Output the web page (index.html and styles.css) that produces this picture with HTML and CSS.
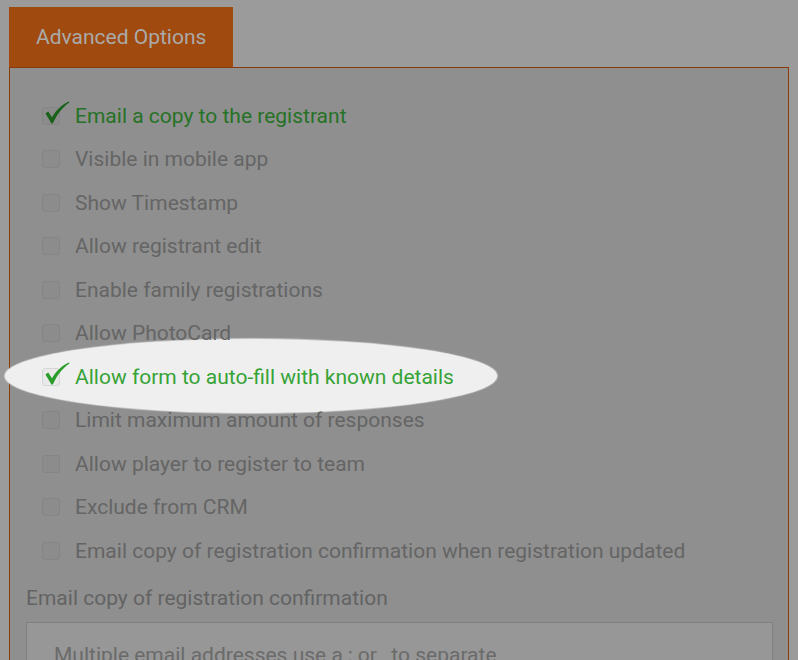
FILE: index.html
```html
<!DOCTYPE html>
<html>
<head>
<meta charset="utf-8">
<link rel="stylesheet" href="styles.css">
</head>
<body>
<div class="tab">Advanced Options</div>
<div class="panel">
  <div class="spotlight"></div>
  <div class="rows">
    <label class="row checked"><span class="box"><svg class="tick" viewBox="0 0 28 26"><path d="M1.5 13.5 L4.5 11.5 L8.5 17.5 C13 10 19 4 27 0.5 L27.5 1.5 C20 6.5 14 14 9.5 24.5 L8 24.5 Z"/></svg></span><span class="text">Email a copy to the registrant</span></label>
    <label class="row"><span class="box"></span><span class="text">Visible in mobile app</span></label>
    <label class="row"><span class="box"></span><span class="text">Show Timestamp</span></label>
    <label class="row"><span class="box"></span><span class="text">Allow registrant edit</span></label>
    <label class="row"><span class="box"></span><span class="text">Enable family registrations</span></label>
    <label class="row"><span class="box"></span><span class="text">Allow PhotoCard</span></label>
    <label class="row checked spot"><span class="box"><svg class="tick" viewBox="0 0 28 26"><path d="M1.5 13.5 L4.5 11.5 L8.5 17.5 C13 10 19 4 27 0.5 L27.5 1.5 C20 6.5 14 14 9.5 24.5 L8 24.5 Z"/></svg></span><span class="text">Allow form to auto-fill with known details</span></label>
    <label class="row"><span class="box"></span><span class="text">Limit maximum amount of responses</span></label>
    <label class="row"><span class="box"></span><span class="text">Allow player to register to team</span></label>
    <label class="row"><span class="box"></span><span class="text">Exclude from CRM</span></label>
    <label class="row"><span class="box"></span><span class="text">Email copy of registration confirmation when registration updated</span></label>
  </div>
  <div class="field-label">Email copy of registration confirmation</div>
  <div class="input">Multiple email addresses use a ; or , to separate</div>
</div>
</body>
</html>
```
FILE: styles.css
```css
html, body {
  margin: 0;
  padding: 0;
  background: #9b9b9b;
  font-family: Roboto, "Liberation Sans", sans-serif;
  overflow: hidden;
  height: 660px;
}
.tab {
  margin: 7px 0 0 9px;
  width: 224px;
  height: 60px;
  box-sizing: border-box;
  padding-left: 27px;
  background: #a14a0f;
  color: #aaaaaa;
  font-size: 21px;
  line-height: 60px;
}
.panel {
  position: relative;
  margin-left: 9px;
  width: 780px;
  box-sizing: border-box;
  border: 1px solid #8a3b0b;
  border-bottom: none;
  background: #8f8f8f;
  padding: 26px 15px 0 16px;
  height: 600px;
}
.spotlight {
  position: absolute;
  left: -5px;
  top: 271px;
  width: 492px;
  height: 74px;
  border-radius: 50%;
  background: #efefef;
  box-shadow: 0 0 1px 1px rgba(239,239,239,0.6);
}
.rows {
  display: flex;
  flex-direction: column;
  padding-left: 16px;
}
.row {
  position: relative;
  display: flex;
  align-items: center;
  height: 43.5px;
  font-size: 21px;
  color: #656565;
}
.box {
  position: relative;
  width: 18px;
  height: 18px;
  box-sizing: border-box;
  border: 1px solid #858585;
  border-radius: 3px;
  background: #8c8c8c;
  margin-right: 15px;
  flex: none;
}
.tick {
  position: absolute;
  left: 1px;
  top: -7px;
  width: 26px;
  height: 24px;
  fill: #1a621a;
}
.row.checked .text {
  color: #267226;
}
.row.spot .box {
  background: #e9e9e9;
  border-color: #d6d6d6;
}
.row.spot .tick {
  fill: #2a9c2a;
}
.row.spot .text {
  color: #36a336;
}
.field-label {
  margin-top: 13px;
  font-size: 21px;
  line-height: 24px;
  color: #636363;
}
.input {
  margin-top: 12px;
  height: 60px;
  box-sizing: border-box;
  border: 1px solid #808080;
  background: #979797;
  padding: 20px 0 0 27px;
  font-size: 21px;
  line-height: 24px;
  color: #6a6a6a;
}
```
